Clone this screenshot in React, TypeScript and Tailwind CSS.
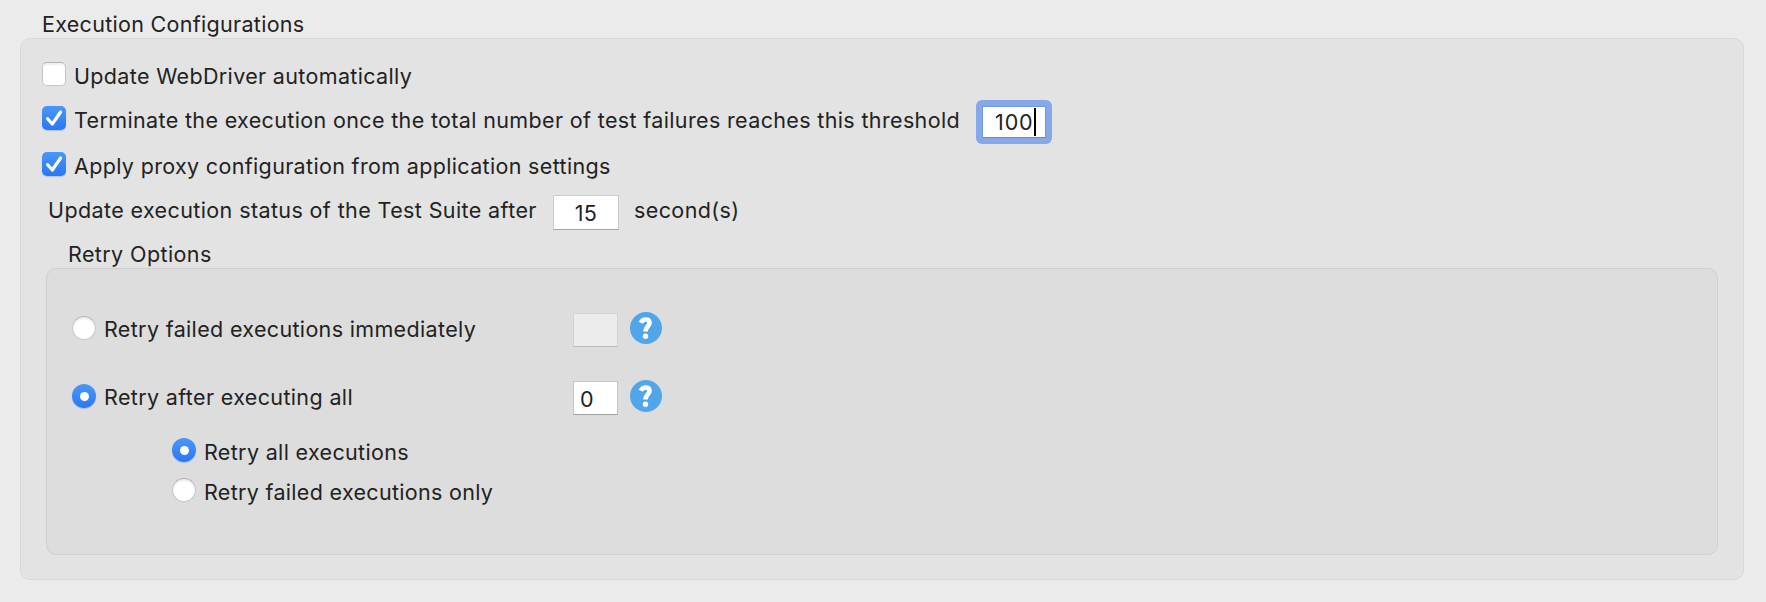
import type { ReactNode } from "react";

function Label({ children, className = "" }: { children: ReactNode; className?: string }) {
  return <span className={`block whitespace-nowrap ${className}`}>{children}</span>;
}

function Checkbox({ checked = false }: { checked?: boolean }) {
  if (!checked) {
    return (
      <span className="block size-6 shrink-0 rounded-[5px] border border-[#c6c6c6] border-t-[#b4b4b4] bg-white shadow-[inset_0_2px_2px_rgba(0,0,0,0.07)]" />
    );
  }
  return (
    <span className="block size-6 shrink-0 rounded-[5px] bg-linear-to-b from-[#4a97f8] to-[#2a77f4] shadow-[0_1px_1px_rgba(42,119,244,0.3)]">
      <svg viewBox="0 0 24 24" className="size-6" fill="none" stroke="#fff" strokeWidth="3.2" strokeLinecap="round" strokeLinejoin="round">
        <path d="M5.6 12.8 10.3 18 18.6 6" />
      </svg>
    </span>
  );
}

function Radio({ checked = false }: { checked?: boolean }) {
  if (!checked) {
    return (
      <span className="block size-6 shrink-0 rounded-full border border-[#c6c6c6] border-t-[#b0b0b0] bg-white shadow-[inset_0_2px_2px_rgba(0,0,0,0.08)]" />
    );
  }
  return (
    <span className="flex size-6 shrink-0 items-center justify-center rounded-full bg-linear-to-b from-[#4a97f8] to-[#2a77f4] shadow-[0_1px_1px_rgba(42,119,244,0.3)]">
      <span className="size-[9px] rounded-full bg-white" />
    </span>
  );
}

function Help() {
  return (
    <svg viewBox="0 0 32 32" className="ml-[12px] size-8 shrink-0">
      <circle cx="16" cy="16" r="16" fill="#50a6e8" />
      <path d="M10.8 10.8C11.8 8.6 13.4 7.5 15.6 7.5 18 7.5 19.5 8.8 19.5 10.9 19.5 14.2 15.5 14.6 15.5 19.6" fill="none" stroke="#fff" strokeWidth="4.7" />
      <circle cx="15.5" cy="24.2" r="2.7" fill="#fff" />
    </svg>
  );
}

export default function App() {
  return (
    <main className="flex h-[602px] w-[1766px] flex-col bg-[#ebebeb] pt-3 pl-5 font-['Inter',sans-serif] text-[21.5px] leading-6 tracking-[0.34px] text-[#222222]">
      <Label className="pl-[22px] tracking-[0.3px]">Execution Configurations</Label>
      <section className="mt-[2px] flex h-[542px] w-[1724px] flex-col rounded-[10px] border border-[#d8d8d8] bg-[#e3e3e3] pt-[23px] pl-[21px]">
        <div className="flex h-6 items-center">
          <Checkbox />
          <Label className="pt-[3px] pl-[8px]">Update WebDriver automatically</Label>
        </div>
        <div className="mt-[14px] flex h-11">
          <div className="pt-[6px]">
            <Checkbox checked />
          </div>
          <Label className="w-[910px] pt-2 pl-[8px] tracking-[0.355px]">Terminate the execution once the total number of test failures reaches this threshold</Label>
          <div className="h-11 w-19 shrink-0 rounded-[6px] bg-[#86a8e8] p-[6px]">
            <div className="flex h-8 w-16 items-center border border-[#7199e2] border-b-[#6a8bcb] bg-white pl-[12px]">
              <span className="w-[39px] tracking-[0.9px]">100</span>
              <span className="h-7 w-[2px] shrink-0 bg-black" />
            </div>
          </div>
        </div>
        <div className="mt-2 flex h-6 items-center">
          <Checkbox checked />
          <Label className="pt-[4px] pl-[8px]">Apply proxy configuration from application settings</Label>
        </div>
        <div className="mt-[19px] flex h-[35px] pl-[6px]">
          <Label className="w-[505px] pt-[3px] tracking-[0.39px]">Update execution status of the Test Suite after</Label>
          <div className="flex h-[35px] w-[66px] items-center justify-center border border-[#cccccc] border-b-[#a6a6a6] bg-white">15</div>
          <Label className="pt-[3px] pl-[15px] tracking-[0.4px]">second(s)</Label>
        </div>
        <Label className="mt-[12px] pl-[26px] tracking-[0.4px]">Retry Options</Label>
        <div className="mt-[2px] ml-1 flex h-[287px] w-[1672px] flex-col rounded-[10px] border border-[#cfcfcf] bg-[#dddddd] pt-[43px] pl-[25px]">
          <div className="flex h-8 items-center">
            <Radio />
            <Label className="w-[477px] pt-[2px] pl-[8px]">Retry failed executions immediately</Label>
            <div className="mt-[4px] h-[34px] w-[45px] shrink-0 border border-[#d3d3d3] border-b-[#bcbcbc] bg-[#ececec]" />
            <Help />
          </div>
          <div className="mt-9 flex h-8 items-center">
            <Radio checked />
            <Label className="w-[477px] pt-[2px] pl-[8px] tracking-[0.36px]">Retry after executing all</Label>
            <div className="mt-[4px] flex h-[34px] w-[45px] shrink-0 items-center border border-[#c6c6c6] border-b-[#a0a0a0] bg-white pt-[1px] pl-[6px]">0</div>
            <Help />
          </div>
          <div className="mt-[26px] flex flex-col gap-4 pl-[100px]">
            <div className="flex h-6 items-center">
              <Radio checked />
              <Label className="pt-[3px] pl-[8px]">Retry all executions</Label>
            </div>
            <div className="flex h-6 items-center">
              <Radio />
              <Label className="pt-[3px] pl-[8px] tracking-[0.31px]">Retry failed executions only</Label>
            </div>
          </div>
        </div>
      </section>
    </main>
  );
}
